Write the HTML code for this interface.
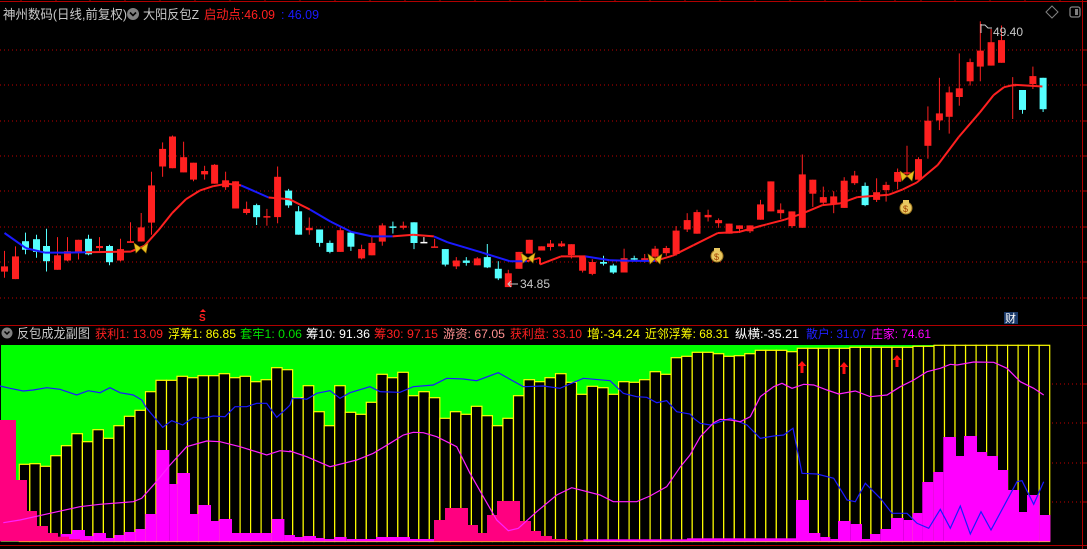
<!DOCTYPE html>
<html><head><meta charset="utf-8"><style>
html,body{margin:0;padding:0;background:#000;width:1087px;height:549px;overflow:hidden}
svg{display:block}
text{font-family:"Liberation Sans","Noto Sans CJK SC",sans-serif}
</style></head><body>
<svg id="s" width="1087" height="549" xmlns="http://www.w3.org/2000/svg">
<rect width="1087" height="549" fill="#000"/>
<g id="g"></g>
<text x="3" y="19" font-size="13" fill="#c8c8c8" textLength="124" lengthAdjust="spacingAndGlyphs">神州数码(日线,前复权)</text>
<circle cx="133" cy="14" r="6" fill="#808080"/><path d="M130 12.5 L133 15.5 L136 12.5" stroke="#000" stroke-width="1.6" fill="none"/>
<text x="143" y="19" font-size="13" fill="#c8c8c8" textLength="56" lengthAdjust="spacingAndGlyphs">大阳反包Z</text>
<text x="204" y="19" font-size="13" fill="#ff2020" textLength="71" lengthAdjust="spacingAndGlyphs">启动点:46.09</text>
<text x="281" y="19" font-size="13" fill="#1a1aff" textLength="38" lengthAdjust="spacingAndGlyphs">: 46.09</text>
<circle cx="7" cy="333" r="5.5" fill="#808080"/><path d="M4.5 331.5 L7 334 L9.5 331.5" stroke="#000" stroke-width="1.5" fill="none"/>
<text x="17" y="338" font-size="13" fill="#c8c8c8" textLength="73" lengthAdjust="spacingAndGlyphs">反包成龙副图</text>
<text x="95" y="338" font-size="12" fill="#ff2020" textLength="68" lengthAdjust="spacingAndGlyphs">获利1: 13.09</text>
<text x="168" y="338" font-size="12" fill="#ffff00" textLength="68" lengthAdjust="spacingAndGlyphs">浮筹1: 86.85</text>
<text x="240" y="338" font-size="12" fill="#00e000" textLength="62" lengthAdjust="spacingAndGlyphs">套牢1: 0.06</text>
<text x="306" y="338" font-size="12" fill="#ffffff" textLength="64" lengthAdjust="spacingAndGlyphs">筹10: 91.36</text>
<text x="374" y="338" font-size="12" fill="#ff2020" textLength="64" lengthAdjust="spacingAndGlyphs">筹30: 97.15</text>
<text x="443" y="338" font-size="12" fill="#ff9090" textLength="62" lengthAdjust="spacingAndGlyphs">游资: 67.05</text>
<text x="510" y="338" font-size="12" fill="#ff2020" textLength="72" lengthAdjust="spacingAndGlyphs">获利盘: 33.10</text>
<text x="587" y="338" font-size="12" fill="#ffff00" textLength="53" lengthAdjust="spacingAndGlyphs">增:-34.24</text>
<text x="645" y="338" font-size="12" fill="#ffff00" textLength="84" lengthAdjust="spacingAndGlyphs">近邻浮筹: 68.31</text>
<text x="735" y="338" font-size="12" fill="#ffffff" textLength="64" lengthAdjust="spacingAndGlyphs">纵横:-35.21</text>
<text x="806" y="338" font-size="12" fill="#2020ff" textLength="60" lengthAdjust="spacingAndGlyphs">散户: 31.07</text>
<text x="871" y="338" font-size="12" fill="#ff00ff" textLength="60" lengthAdjust="spacingAndGlyphs">庄家: 74.61</text>
<text x="993" y="36" font-size="12" fill="#c8c8c8">49.40</text>
<path d="M981 24 V33 M981 25 H985 L988 28 H992" stroke="#c8c8c8" fill="none"/>
<text x="520" y="288" font-size="12" fill="#c8c8c8">34.85</text>
<path d="M518 284 H508 M511 281 L508 284 L511 287" stroke="#c8c8c8" fill="none"/>
<path d="M1046 12 L1052 6 L1058 12 L1052 18 Z" stroke="#808080" fill="none"/>
<rect x="1070" y="7" width="10" height="10" rx="2" stroke="#808080" fill="none" stroke-width="1.3"/><rect x="1075" y="9" width="3" height="6" fill="#808080"/>
<rect x="1004" y="312" width="14" height="12" fill="#1a3a6a"/><text x="1005" y="322" font-size="11" fill="#fff">财</text>
<text x="199" y="321" font-size="10" fill="#ff2020" font-weight="bold">S</text><path d="M200 312 L203 309 L206 312 Z" fill="#ff2020"/>
</svg>
<script>
var g=document.getElementById('g'),h='';
function R(x,y,w,hh,f,ex){h+='<rect x="'+x+'" y="'+y+'" width="'+w+'" height="'+hh+'" fill="'+f+'" '+(ex||'')+'/>';}
function L(pts,c,w){h+='<polyline points="'+pts.map(function(p){return p[0].toFixed(1)+','+p[1].toFixed(1)}).join(' ')+'" fill="none" stroke="'+c+'" stroke-width="'+(w||1)+'"/>';}
h+='<line x1="0" y1="1.5" x2="1087" y2="1.5" stroke="#b00000"/>';
[21,56,90,125,160,195,230,265,300,335,370,405,440,475,510,545,580,615,650,685,720,755,790,825,860,895,921,955,990,1025,1060].forEach(function(x){h+='<line x1="'+x+'" y1="0" x2="'+x+'" y2="2" stroke="#b00000"/>';});
h+='<line x1="0" y1="325.5" x2="1087" y2="325.5" stroke="#b00000"/>';
h+='<line x1="1082.5" y1="0" x2="1082.5" y2="549" stroke="#b00000"/>';
h+='<line x1="0" y1="545.5" x2="1087" y2="545.5" stroke="#b00000"/>';
[50,85,121,156,191,227,262,298].forEach(function(y){h+='<line x1="0" y1="'+y+'" x2="1082" y2="'+y+'" stroke="#c00000" stroke-dasharray="1 3"/>';h+='<line x1="1082" y1="'+y+'" x2="1087" y2="'+y+'" stroke="#b00000"/>';});
[384,423,463,502].forEach(function(y){h+='<line x1="1052" y1="'+y+'" x2="1082" y2="'+y+'" stroke="#c00000" stroke-dasharray="1 3"/><line x1="1082" y1="'+y+'" x2="1087" y2="'+y+'" stroke="#b00000"/>';});
var COL={r:'#ff2020',c:'#55ffff',w:'#ffffff'};
function cand(a,s,ox,oy){a.forEach(function(c){var x=ox+c[0]/s,t=oy+c[1]/s,b=oy+c[2]/s,wt=oy+c[3]/s,wb=oy+c[4]/s,f=COL[c[5]];
h+='<line x1="'+x.toFixed(1)+'" y1="'+wt.toFixed(1)+'" x2="'+x.toFixed(1)+'" y2="'+wb.toFixed(1)+'" stroke="'+f+'"/>';
R((x-3.5).toFixed(1),t.toFixed(1),7,Math.max(1.5,b-t).toFixed(1),f);});}
var s5=2.9037,s6=2.8665;
cand([[13,425,440,380,458,'r'],[45,396,462,367,462,'r'],[74,352,377,327,390,'c'],[106,346,383,333,400,'c'],[135,366,410,316,440,'c'],[167,393,435,340,435,'r'],[196,381,408,340,410,'r'],[228,348,383,348,405,'r'],[257,345,390,333,393,'c'],[289,366,372,340,380,'r'],[318,366,413,362,422,'c'],[350,375,408,345,410,'r'],[379,352,357,297,357,'r'],[410,312,353,270,353,'r'],[440,190,298,150,333,'r'],[472,84,135,65,165,'r'],[501,48,140,45,140,'r'],[533,108,152,63,152,'r'],[562,124,173,124,178,'r'],[594,148,158,133,173,'r'],[623,130,185,128,185,'r'],[655,175,195,150,203,'r'],[684,178,257,178,257,'r'],[716,258,270,237,275,'r'],[745,247,282,243,305,'c'],[775,279,281,258,307,'r'],[806,165,282,135,300,'r'],[838,205,248,200,255,'c'],[867,265,333,250,333,'c'],[898,313,320,283,333,'r'],[928,318,357,318,368,'c'],[958,357,383,350,387,'c'],[988,320,383,310,383,'r'],[1019,327,368,327,380,'c'],[1050,375,402,362,405,'r'],[1080,357,393,340,393,'r'],[1110,306,353,300,365,'r'],[1141,309,313,295,330,'c'],[1171,307,313,295,318,'r'],[1202,297,357,297,375,'c'],[1231,354,356,340,356,'w'],[1262,367,369,345,370,'r'],[1293,375,420,375,425,'c'],[1325,408,425,398,433,'r'],[1354,408,415,398,423,'c'],[1386,402,422,398,422,'r'],[1415,398,428,360,430,'c'],[1447,432,460,410,465,'c'],[1476,445,485,435,485,'r'],[1507,383,432,383,432,'r'],[1537,348,388,348,388,'r']],s5,0,120);
cand([[5,663,675,663,675,'r'],[30,655,665,645,675,'r'],[62,655,663,648,665,'r'],[90,657,688,657,698,'r'],[122,690,733,690,738,'r'],[150,708,742,700,746,'r'],[182,708,713,690,718,'c'],[210,718,738,713,742,'c'],[241,697,738,670,738,'r'],[270,697,700,690,705,'c'],[300,697,703,685,710,'r'],[330,670,693,662,700,'r'],[362,668,683,662,690,'r'],[390,618,685,605,690,'r'],[422,588,615,568,622,'r'],[450,565,627,558,627,'r'],[482,573,580,558,592,'r'],[512,588,597,583,610,'r'],[542,598,627,598,627,'r'],[572,603,613,603,625,'r'],[602,603,620,603,625,'r'],[632,543,587,530,587,'r'],[662,477,563,477,563,'r'],[690,558,568,540,585,'r'],[722,563,605,563,610,'r'],[752,457,610,400,610,'r'],[782,472,512,472,550,'r'],[812,522,538,492,545,'r'],[842,520,543,505,568,'r'],[872,475,553,465,553,'r'],[902,460,482,447,487,'r'],[932,490,545,480,548,'c'],[965,508,530,468,536,'r'],[992,487,502,478,535,'r'],[1025,450,478,440,500,'r'],[1052,451,453,375,465,'r'],[1085,413,472,408,472,'r'],[1112,303,375,262,412,'r'],[1145,282,302,180,330,'r'],[1173,222,292,205,340,'r'],[1202,210,235,110,260,'r'],[1233,135,190,125,202,'r'],[1262,102,148,18,190,'r'],[1293,78,145,40,145,'r'],[1323,72,137,30,137,'r'],[1355,200,202,178,298,'r'],[1383,215,272,215,283,'c'],[1413,175,198,148,212,'r'],[1442,180,270,180,278,'c']],s6,540,15);
function conv(a,s,ox,oy){return a.map(function(p){return [ox+p[0]/s,oy+p[1]/s];});}
var m5=conv([[13,328],[75,372],[130,385],[190,385],[250,384],[380,382],[420,365],[460,320],[500,270],[540,230],[580,205],[620,192],[660,185],[700,190],[780,225],[840,230],[900,260],[960,295],[1020,325],[1080,338],[1140,338],[1200,333],[1260,338],[1300,355],[1400,385],[1480,410],[1530,410],[1568,400]],s5,0,120);
var m6=conv([[0,715],[60,692],[130,692],[200,703],[270,705],[330,705],[380,690],[440,660],[510,625],[570,622],[650,600],[700,587],[750,570],[810,545],[860,540],[910,522],[1000,515],[1040,500],[1080,480],[1140,430],[1200,350],[1260,280],[1300,230],[1330,207],[1360,200],[1440,205]],s6,540,15);
var ma=m5.concat(m6);
for(var i=1;i<ma.length;i++){var a=ma[i-1],b=ma[i];var blue=(a[0]<70)||(a[0]>=234&&a[0]<268)||(a[0]>=290&&a[0]<380)||(a[0]>=414&&a[0]<520)||(a[0]>=585&&a[0]<635);L([a,b],blue?'#1a1aff':'#ff2020',2);}
function fly(x,y){h+='<path d="M'+x+' '+y+' L'+(x-7)+' '+(y-5)+' L'+(x-5)+' '+(y+5)+' Z M'+x+' '+y+' L'+(x+7)+' '+(y-5)+' L'+(x+5)+' '+(y+5)+' Z" fill="#e8c020" stroke="#a07000" stroke-width="0.6"/>';}
fly(141,248);fly(528,258);fly(655,259);fly(907,176);
function bag(x,y){h+='<circle cx="'+x+'" cy="'+(y+2)+'" r="6" fill="#e8c860" stroke="#a07820"/><rect x="'+(x-3)+'" y="'+(y-6)+'" width="6" height="3" fill="#e8c860"/><text x="'+(x-3)+'" y="'+(y+6)+'" font-size="9" fill="#a04000">$</text>';}
bag(717,254);bag(906,206);
R(1,345,1049,197,'#00ff00');
var tops=[373,371,379,347,317,281,305,269,295,257,229,211,155,121,121,109,113,107,107,101,113,109,125,119,83,89,
173,137,215,257,137,217,223,187,103,113,97,167,155,173,235,215,223,199,227,257,235,167,119,125,113,101,127,163,139,143,163,125,127,119,95,103,53,49,
37,37,41,49,47,41,31,31,31,35,25,25,25,25,25,22,22,22,22,22,22,19,19,16,16,16,16,16,16,16,16,16,16,16];
var st=10.514;
tops.forEach(function(t,i){var x=19.3+i*st,y=340+t/3;R(x.toFixed(1),y.toFixed(1),st.toFixed(2),(541.5-y).toFixed(1),'#000','stroke="#ffff00" stroke-width="1.2"');});
function hist(a,s,ox,oy,c){a.forEach(function(p){var x1=ox+p[0]/s,x2=ox+p[1]/s,y=oy+p[2]/s;R(x1.toFixed(1),y.toFixed(1),(x2-x1).toFixed(1),(541.5-y).toFixed(1),c);});}
var MG='#ff00ff',PK='#ff0080';
hist([[182,216,582],[216,255,570],[255,280,588],[280,318,579],[318,343,594],[343,373,585],[373,406,576],[406,436,567],[436,469,522],[469,508,330],[508,532,432],[532,570,399],[570,595,522],[595,633,495],[633,658,543],[658,696,537],[696,815,579],[815,853,537],[853,885,585],[885,900,591]],3,0,340,MG);
hist([[0,48,240],[48,81,420],[81,111,513],[111,144,558],[144,174,579],[174,207,590],[207,240,597],[240,270,600]],3,0,340,PK);
hist([[0,15,585],[15,40,591],[40,78,588],[78,103,594],[103,133,597],[133,170,591],[170,258,597],[258,360,591],[360,432,597],[880,1200,598]],3,290,340,MG);
hist([[432,465,540],[465,534,504],[534,564,555],[564,591,579],[591,621,525],[621,690,483],[690,723,543],[723,753,573],[753,786,588],[786,833,597],[833,880,600]],3,290,340,PK);
hist([[0,327,595],[327,366,480],[366,400,579],[400,430,591],[430,453,597],[453,491,543],[491,525,552],[525,549,597],[549,580,582],[580,612,567],[612,650,534],[650,677,540],[677,706,519],[706,739,426],[739,769,396],[769,807,291],[807,831,348],[831,870,288],[870,900,336],[900,933,348],[933,963,390],[963,996,450],[996,1020,516],[1020,1058,465],[1058,1090,525]],3,687,340,MG);
var bl=conv([[0,138],[30,145],[70,153],[100,150],[140,143],[180,148],[230,165],[265,152],[300,158],[330,143],[360,158],[400,165],[425,180],[440,205],[488,262],[515,242],[548,255],[580,232],[610,235],[640,228],[675,230],[705,200],[740,200],[770,190],[800,190],[830,232],[860,205],[870,195]],3,0,340)
.concat(conv([[7,175],[30,175],[50,178],[80,160],[120,152],[150,175],[180,158],[240,140],[270,155],[330,157],[370,140],[430,135],[470,115],[520,117],[560,122],[625,98],[700,140],[760,138],[810,145],[880,115],[960,122],[1000,160],[1040,170],[1070,172],[1100,188],[1130,182],[1160,215],[1200,222]],3,290,340))
.concat(conv([[20,235],[40,250],[70,255],[130,235],[180,255],[220,295],[260,288],[290,285],[318,265],[345,400],[390,402],[440,415],[480,480],[505,485],[535,430],[580,475],[615,520],[660,520],[690,550],[725,565],[760,508],[790,565],[820,498],[850,582],[882,515],[912,570],[990,425],[1005,422],[1040,493],[1070,425]],3,687,340));
L(bl,'#1a1aff',1.2);
var mg=conv([[10,548],[60,540],[150,520],[240,500],[300,493],[400,485],[425,475],[465,430],[510,375],[560,320],[620,303],[660,305],[720,320],[800,345],[840,332],[870,335]],3,0,340)
.concat(conv([[0,333],[50,350],[120,380],[200,360],[250,340],[300,310],[340,285],[370,277],[400,278],[440,290],[500,320],[540,400],[580,470],[620,540],[655,572],[685,565],[740,515],[800,465],[845,443],[880,452],[930,465],[970,485],[1040,485],[1080,468],[1130,440],[1170,382],[1200,345]],3,290,340))
.concat(conv([[20,325],[40,290],[80,248],[100,238],[130,240],[160,245],[190,230],[220,170],[260,140],[285,130],[315,145],[350,133],[380,135],[420,150],[455,162],[505,153],[550,170],[600,165],[640,140],[680,120],[720,95],[760,85],[790,73],[810,75],[860,66],[920,67],[960,85],[1000,125],[1040,145],[1070,165]],3,687,340));
L(mg,'#ff20ff',1.2);
function arr(x,y){h+='<path d="M'+x+' '+(y-6)+' L'+(x+4.5)+' '+(y-1)+' L'+(x+1.5)+' '+(y-1)+' L'+(x+1.5)+' '+(y+6)+' L'+(x-1.5)+' '+(y+6)+' L'+(x-1.5)+' '+(y-1)+' L'+(x-4.5)+' '+(y-1)+' Z" fill="#ff1010"/>';}
arr(802,367);arr(844,368);arr(897,361);
g.innerHTML=h;
</script>
</body></html>
